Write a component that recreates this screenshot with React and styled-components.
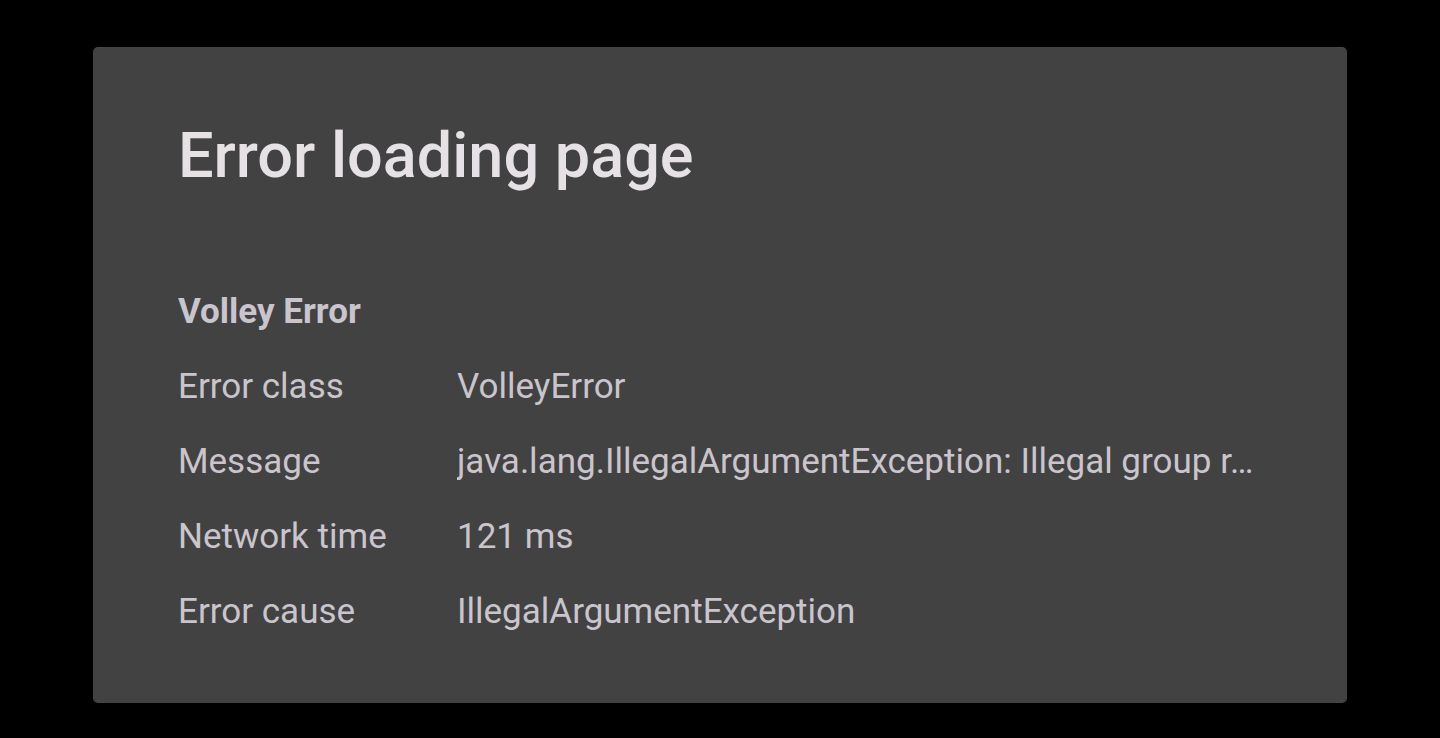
import React from 'react';
import styled, { createGlobalStyle } from 'styled-components';

const GlobalStyle = createGlobalStyle`
  html, body {
    margin: 0;
    padding: 0;
    background: #000;
    font-family: Roboto, "Noto Sans", sans-serif;
  }
`;

const Screen = styled.div`
  width: 1440px;
  height: 738px;
  box-sizing: border-box;
  padding: 47px 93px 35px 93px;
  background: #000;
`;

const Card = styled.section`
  height: 100%;
  box-sizing: border-box;
  background: #424242;
  border-radius: 5px;
  padding: 74px 85px 0 85px;
`;

const Title = styled.h1`
  margin: 0 0 83px 0;
  font-size: 63px;
  font-weight: 500;
  line-height: 70px;
  color: #e6e1e5;
`;

const Details = styled.div`
  display: grid;
  grid-template-columns: 279px 1fr;
  font-size: 35px;
  line-height: 75px;
  color: #cac5cd;
`;

const Heading = styled.div`
  grid-column: 1 / -1;
  font-weight: 700;
`;

const Cell = styled.div`
  white-space: nowrap;
  overflow: hidden;
  text-overflow: ellipsis;
  min-width: 0;
`;

const rows = [
  ['Error class', 'VolleyError'],
  ['Message', 'java.lang.IllegalArgumentException: Illegal group r…'],
  ['Network time', '121 ms'],
  ['Error cause', 'IllegalArgumentException'],
];

const App = () => (
  <>
    <GlobalStyle />
    <Screen>
      <Card>
        <Title>Error loading page</Title>
        <Details>
          <Heading>Volley Error</Heading>
          {rows.map(([label, value]) => (
            <React.Fragment key={label}>
              <Cell>{label}</Cell>
              <Cell>{value}</Cell>
            </React.Fragment>
          ))}
        </Details>
      </Card>
    </Screen>
  </>
);

export default App;
